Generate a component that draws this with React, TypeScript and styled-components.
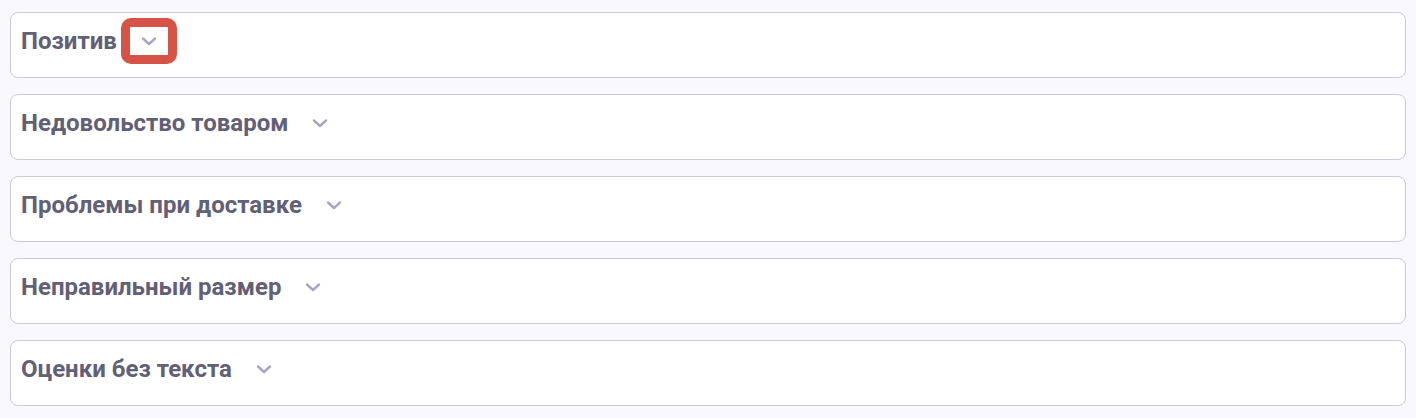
import React from "react";
import styled, { createGlobalStyle } from "styled-components";

const Global = createGlobalStyle`
  html, body { margin: 0; padding: 0; background: #f9f8fe; }
  body { font-family: Roboto, "Noto Sans", sans-serif; }
`;

const Page = styled.div`
  display: flex;
  flex-direction: column;
  gap: 16px;
  padding: 12px 10px;
  width: 1416px;
  box-sizing: border-box;
`;

const Card = styled.div`
  background: #ffffff;
  border: 1px solid #cbc7df;
  border-radius: 8px;
  padding: 14px 10px 21px;
  box-sizing: border-box;
  height: 66px;
`;

const Header = styled.div`
  display: flex;
  align-items: center;
  gap: 13px;
  height: 28px;
`;

const Title = styled.span`
  font-family: Roboto, "Noto Sans", sans-serif;
  font-weight: 700;
  font-size: 24px;
  line-height: 28px;
  color: #616076;
  white-space: nowrap;
`;

const Toggle = styled.button<{ $focused?: boolean }>`
  width: 38px;
  height: 28px;
  padding: 0;
  border: none;
  background: #ffffff;
  display: flex;
  align-items: center;
  justify-content: center;
  cursor: pointer;
  border-radius: 1px;
  outline: ${(p) => (p.$focused ? "9px solid #d65347" : "none")};
  outline-offset: 0;
`;

const Chevron = () => (
  <svg width="18" height="10" viewBox="0 0 18 10" fill="none">
    <path d="M3 2.5 L9 8 L15 2.5" stroke="#a9a6c2" strokeWidth="2.4" strokeLinecap="round" strokeLinejoin="round" />
  </svg>
);

const items = [
  "Позитив",
  "Недовольство товаром",
  "Проблемы при доставке",
  "Неправильный размер",
  "Оценки без текста",
];

export default function App() {
  return (
    <>
      <Global />
      <Page>
        {items.map((t, i) => (
          <Card key={t}>
            <Header>
              <Title>{t}</Title>
              <Toggle $focused={i === 0} aria-label="Развернуть">
                <Chevron />
              </Toggle>
            </Header>
          </Card>
        ))}
      </Page>
    </>
  );
}
